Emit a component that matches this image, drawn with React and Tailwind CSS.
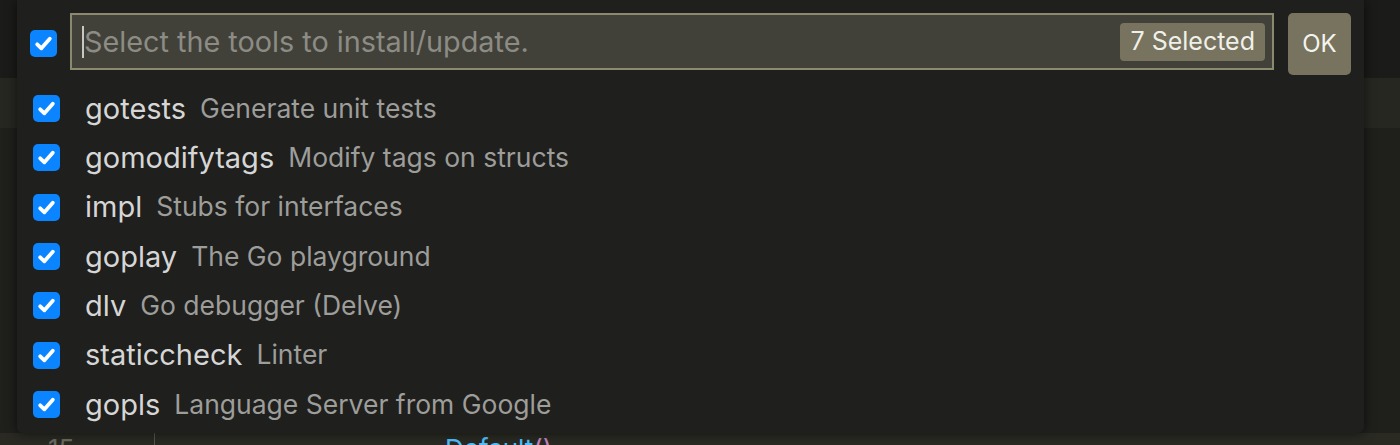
import React from "react";

const items = [
  ["gotests", "Generate unit tests"],
  ["gomodifytags", "Modify tags on structs"],
  ["impl", "Stubs for interfaces"],
  ["goplay", "The Go playground"],
  ["dlv", "Go debugger (Delve)"],
  ["staticcheck", "Linter"],
  ["gopls", "Language Server from Google"],
];

function Check() {
  return (
    <div className="w-[27px] h-[27px] rounded-[5px] bg-[#0a84ff] flex items-center justify-center shrink-0">
      <svg width="21" height="21" viewBox="0 0 16 16">
        <path d="M3.2 8.6 L6.4 11.7 L12.8 4.3" fill="none" stroke="white" strokeWidth="2.9" strokeLinecap="round" strokeLinejoin="round" />
      </svg>
    </div>
  );
}

export default function App() {
  const font = { fontFamily: "Inter, 'Noto Sans', sans-serif" };
  return (
    <div className="relative w-[1400px] h-[445px] overflow-hidden bg-[#1f1f1c]" style={font}>
      {/* background workbench */}
      <div className="flex flex-col h-full">
        <div className="h-[78px] bg-[#1b1b19]" />
        <div className="h-[50px] bg-[#272722]" />
        <div className="flex-1 bg-[#1f1f1c]" />
        <div className="h-[12px] bg-[#2a2a23] flex overflow-hidden">
          <div className="w-[155px] shrink-0 border-r border-[#55554a] text-[#6b6b60] text-[26px] leading-none pl-[48px] pt-[3px]">15</div>
          <div className="pl-[290px] pt-[3px] text-[26px] leading-none text-[#4fc1ff] whitespace-nowrap">Default<span className="text-[#c586c0]">()</span></div>
        </div>
      </div>

      {/* quick pick */}
      <div className="absolute left-[17px] top-0 w-[1347px] h-[433px] bg-[#1f1f1d] shadow-[0_0_12px_rgba(0,0,0,0.6)] rounded-b-[6px]">
        <div className="flex items-start pt-[13px] pl-[13px] pr-[13px]">
          <div className="pt-[17px]">
            <Check />
          </div>
          <div className="ml-[13px] w-[1204px] h-[57px] border-2 border-[#8b8a6e] bg-[#41413a] flex items-center pl-[10px] pr-[7px]">
            <div className="w-[2px] h-[32px] bg-[#c8c8c0]" />
            <div className="flex-1 text-[28.8px] text-[#8c8c85] whitespace-nowrap">Select the tools to install/update.</div>
            <div className="h-[38px] px-[10px] rounded-[4px] bg-[#77735f] text-[#f0f0ea] text-[25px] flex items-center">7 Selected</div>
          </div>
          <div className="ml-[14px] w-[63px] h-[62px] rounded-[5px] bg-[#77735f] text-[#f4f4ee] text-[24px] flex items-center justify-center">OK</div>
        </div>
        <div className="mt-[9px] flex flex-col">
          {items.map(([name, desc]) => (
            <div key={name} className="h-[49.3px] flex items-center pl-[16px] whitespace-nowrap">
              <Check />
              <span className="ml-[25px] text-[29px] text-[#d6d6d6]">{name}</span>
              <span className="ml-[14px] text-[26.5px] text-[#9d9d9a]">{desc}</span>
            </div>
          ))}
        </div>
      </div>
    </div>
  );
}
